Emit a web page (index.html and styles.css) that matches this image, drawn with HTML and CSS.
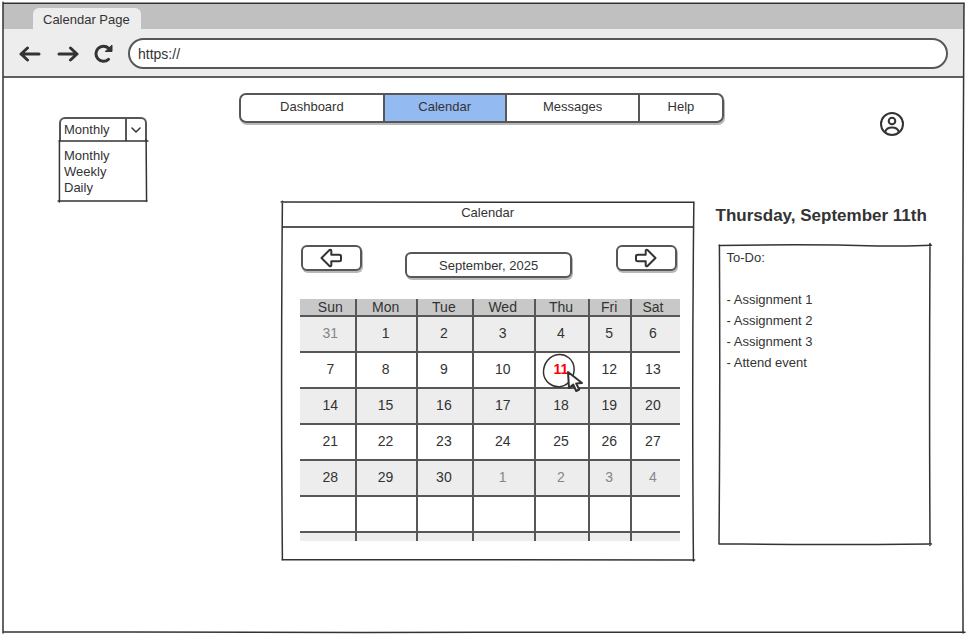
FILE: index.html
```html
<!DOCTYPE html>
<html lang="en">
<head>
<meta charset="utf-8">
<meta name="viewport" content="width=device-width, initial-scale=1">
<title>Calendar Page</title>
<link rel="stylesheet" href="styles.css">
</head>
<body>
<div class="window">
  <div class="tabs"><div class="tab">Calendar Page</div></div>
  <div class="toolbar">
    <button class="tool" type="button" aria-label="Back"><svg width="22" height="20" viewBox="0 0 22 20"><path d="M20 10H2M8.500 4L2 10l6.500 6"/></svg></button>
    <button class="tool" type="button" aria-label="Forward"><svg width="22" height="20" viewBox="0 0 22 20"><path d="M2 10h18M13.500 4L20 10l-6.500 6"/></svg></button>
    <button class="tool" type="button" aria-label="Reload"><svg width="22" height="20" viewBox="0 0 22 20"><path d="M16.500 4.200A7.500 7.500 0 1 0 16.500 15.300"/><path class="solid" d="M20 1.500v6h-6.500z"/></svg></button>
    <input class="address" type="text" value="https://" aria-label="Address">
  </div>

  <header class="top">
    <div class="view">
      <div class="view-box">
        <select class="view-select" aria-label="View">
          <option>Monthly</option><option>Weekly</option><option>Daily</option>
        </select>
        <span class="view-arrow"><svg width="12" height="8" viewBox="0 0 12 8"><path d="M2 2l4 4 4-4"/></svg></span>
      </div>
      <div class="view-menu">
        <ul class="view-list">
          <li>Monthly</li><li>Weekly</li><li>Daily</li>
        </ul>
        <svg class="frame" viewBox="0 0 100 100" preserveAspectRatio="none" aria-hidden="true"><path d="M0 0L101 0M.5 -1L.5 100M-1 98.500L100 98M99 -2L99.500 99"/></svg>
      </div>
    </div>
    <nav class="nav">
      <a href="#">Dashboard</a>
      <a href="#" class="active">Calendar</a>
      <a href="#">Messages</a>
      <a href="#">Help</a>
    </nav>
    <button class="account" type="button" aria-label="Account"><svg width="26" height="26" viewBox="0 0 26 26"><circle cx="13" cy="13" r="11"/><circle cx="13" cy="10" r="3.300"/><path d="M6.200 21c.8-3.400 3.200-4.500 6.800-4.500s6 1.100 6.800 4.500"/></svg></button>
  </header>

  <main class="main">
    <section class="calendar">
      <h2 class="calendar-title">Calendar</h2>
      <div class="controls">
        <button class="step" type="button" aria-label="Previous month"><svg width="24" height="20" viewBox="0 0 24 20"><path d="M2.500 10L10.500 2q1.800-.6 1.800 1v3.700h7.700q2 0 2 1.500v3.600q0 1.500-2 1.500h-7.700V17q0 1.600-1.800 1z"/></svg></button>
        <input class="month" type="text" value="September, 2025" aria-label="Month">
        <button class="step" type="button" aria-label="Next month"><svg width="24" height="20" viewBox="0 0 24 20"><path d="M21.500 10L13.500 2q-1.800-.6-1.800 1v3.700H4q-2 0-2 1.500v3.600q0 1.500 2 1.500h7.700V17q0 1.600 1.800 1z"/></svg></button>
      </div>
      <table class="month-table">
        <colgroup><col class="c-sun"><col class="c-mon"><col class="c-tue"><col class="c-wed"><col class="c-thu"><col class="c-fri"><col class="c-sat"></colgroup>
        <thead><tr><th>Sun</th><th>Mon</th><th>Tue</th><th>Wed</th><th>Thu</th><th>Fri</th><th>Sat</th></tr></thead>
        <tbody>
          <tr><td class="other">31</td><td>1</td><td>2</td><td>3</td><td>4</td><td>5</td><td>6</td></tr>
          <tr><td>7</td><td>8</td><td>9</td><td>10</td><td class="today">11
            <svg class="ring" width="34" height="36" viewBox="0 0 34 36" aria-hidden="true"><path d="M17 1.500C24 1 31 6.500 32 14c1 8-4 18-13 19.500C10 35 2 28 1.500 20 1 10 8 2 17 1.500z"/></svg>
            <svg class="pointer" width="18" height="24" viewBox="0 0 18 24" aria-hidden="true"><path d="M2 2l1 16 4.200-3.500 3 6.500 3-1.500-3-6L16 13z"/></svg>
          </td><td>12</td><td>13</td></tr>
          <tr><td>14</td><td>15</td><td>16</td><td>17</td><td>18</td><td>19</td><td>20</td></tr>
          <tr><td>21</td><td>22</td><td>23</td><td>24</td><td>25</td><td>26</td><td>27</td></tr>
          <tr><td>28</td><td>29</td><td>30</td><td class="other">1</td><td class="other">2</td><td class="other">3</td><td class="other">4</td></tr>
          <tr><td></td><td></td><td></td><td></td><td></td><td></td><td></td></tr>
          <tr class="stub"><td></td><td></td><td></td><td></td><td></td><td></td><td></td></tr>
        </tbody>
      </table>
      <svg class="frame" viewBox="0 0 100 100" preserveAspectRatio="none" aria-hidden="true"><path d="M-.2 0Q50 .2 100 .1M.1 -.2Q-.3 50 .1 100M0 99.900Q50 99.700 100.200 100M100 0Q99.500 50 99.900 100.300"/></svg>
    </section>

    <section class="day">
      <h1 class="day-title">Thursday, September 11th</h1>
      <div class="todo">
        <textarea class="todo-text" aria-label="To-Do">To-Do:

- Assignment 1
- Assignment 2
- Assignment 3
- Attend event</textarea>
        <svg class="frame" viewBox="0 0 100 100" preserveAspectRatio="none" aria-hidden="true"><path d="M0 .2Q40 -.4 75 .3Q90 .5 100.500 .1M.2 0Q.6 50 0 100M0 99.900Q40 100.400 100.500 100M99.800 -.5Q99.400 50 99.800 100.500"/></svg>
      </div>
    </section>
  </main>
  <svg class="frame" viewBox="0 0 100 100" preserveAspectRatio="none" aria-hidden="true"><path d="M0 0Q50 .1 100 0M0 -.1V100M0 99.800Q25 99.950 50 99.900T100.100 99.900M100 0Q99.800 50 99.900 100"/></svg>
</div>
</body>
</html>
```
FILE: styles.css
```css
* { box-sizing: border-box; }

:root {
  --ink: #333;
  --line: #575757;
  --soft: #ededed;
  --shadow: 1px 2px 0 #b8b8b8;
}

body {
  margin: 0;
  background: #fff;
  color: var(--ink);
  font: 13px/16px "Liberation Sans", Arial, sans-serif;
}

button, input, select, textarea { font: inherit; color: inherit; margin: 0; }

svg { fill: none; stroke: var(--ink); stroke-width: 2; stroke-linecap: round; stroke-linejoin: round; display: block; }

.frame { position: absolute; inset: 0; width: 100%; height: 100%; overflow: visible; pointer-events: none; }
.frame path { stroke-width: 1.5px; vector-effect: non-scaling-stroke; }

.window { position: relative; margin: 3px 2px 2px 3px; min-height: calc(100vh - 5px); }

.tabs { background: #c0c0c0; padding: 5px 30px 0; display: flex; }
.tab { background: var(--soft); border-radius: 6px 6px 0 0; padding: 2px 11px 0 10px; height: 21px; line-height: 20px; }

.toolbar { background: var(--soft); border-bottom: 2px solid #606060; display: flex; align-items: center; padding: 9px 16px 7px; }
.tool { border: 0; background: none; padding: 0; margin-right: 16px; }
.tool svg { stroke-width: 3; }
.tool:nth-child(2) { margin-right: 13px; }
.tool:nth-child(3) { margin-right: 14px; }
.tool .solid { fill: var(--ink); stroke-width: 1; }
.address { flex: 1; min-width: 0; height: 31px; border: 2px solid var(--line); border-radius: 16px; background: #fff; padding: 0 8px; font-size: 14px; }

.top { display: grid; grid-template-columns: 236fr 484fr 240fr; align-items: start; padding-top: 15px; }
.view { width: 88px; margin: 24px 0 0 56px; }
.view-box { display: flex; height: 24px; border: 2px solid var(--line); border-bottom: 0; border-radius: 6px 6px 0 0; }
.view-select { flex: 1; min-width: 0; appearance: none; border: 0; background: none; padding: 0 3px; }
.view-arrow { width: 20px; border-left: 2px solid var(--line); display: grid; place-items: center; }
.view-arrow svg { stroke-width: 1.5px; }
.view-menu { position: relative; }
.view-list { list-style: none; margin: 0; padding: 7px 5px 6px; }

.nav { display: grid; grid-template-columns: 142fr 123fr 134fr 84fr; height: 30px; border: 2px solid var(--line); border-radius: 7px; box-shadow: var(--shadow); }
.nav a { color: inherit; text-decoration: none; text-align: center; line-height: 24px; }
.nav a + a { border-left: 2px solid var(--line); }
.nav .active { background: #94baf2; }

.account { justify-self: end; border: 0; background: none; padding: 0; margin: 18px 59px 0 0; }

.main { display: grid; grid-template-columns: 411fr 211fr; column-gap: 25px; padding: 0 3.6% 69px 29%; align-items: start; }
.main { padding: 0 34px 69px 29%; }

.calendar { position: relative; padding: 1px 14px 19px 18px; }
.calendar-title { margin: 0 -14px 17px -18px; height: 25px; border-bottom: 2px solid var(--line); font-size: 13px; font-weight: 400; line-height: 19px; text-align: center; }
.controls { display: grid; grid-template-columns: 61px 167px 61px; justify-content: space-between; align-items: start; padding: 0 3px 0 1px; }
.step, .month { border: 2px solid var(--line); border-radius: 6px; background: #fff; box-shadow: var(--shadow); height: 26px; padding: 0; }
.step svg { margin: auto; }
.month { width: 100%; margin-top: 7px; text-align: center; }

.month-table { width: 100%; margin-top: 21px; table-layout: fixed; border-collapse: collapse; font-size: 14px; line-height: 16px; }
.c-sun { width: 56px; }
.c-mon { width: 61px; }
.c-tue { width: 55px; }
.c-wed { width: 62px; }
.c-thu { width: 54px; }
.c-fri { width: 42px; }
.c-sat { width: 48px; }
.month-table th, .month-table td { padding: 0 2px 0 0; text-align: center; font-weight: 400; border-left: 2px solid var(--line); }
.month-table th { height: 17px; background: #c8c8c8; }
.month-table tbody td { height: 36px; padding-bottom: 2px; border-top: 2px solid var(--line); }
.month-table tr > :first-child { border-left: 0; padding-left: 6px; padding-right: 0; }
.month-table tr > :last-child { padding-right: 6px; }
.month-table tbody tr:nth-child(odd) { background: var(--soft); }
.month-table tbody .stub td { height: 9px; padding: 0; }
.month-table .other { color: #85858c; }
.month-table .today { position: relative; color: #f00; font-weight: 700; }
.ring, .pointer { position: absolute; }
.ring { left: 6px; top: 0; stroke-width: 1.5px; }
.pointer { left: 30px; top: 17px; }
.pointer path { fill: #fff; }

.day-title { margin: 4px -3px 19px; font-size: 17px; line-height: 20px; white-space: nowrap; }
.todo { position: relative; padding: 2px; }
.todo-text { display: block; width: 100%; height: 295px; border: 0; padding: 0 6px; background: none; resize: none; line-height: 21px; outline: 0; }
```
